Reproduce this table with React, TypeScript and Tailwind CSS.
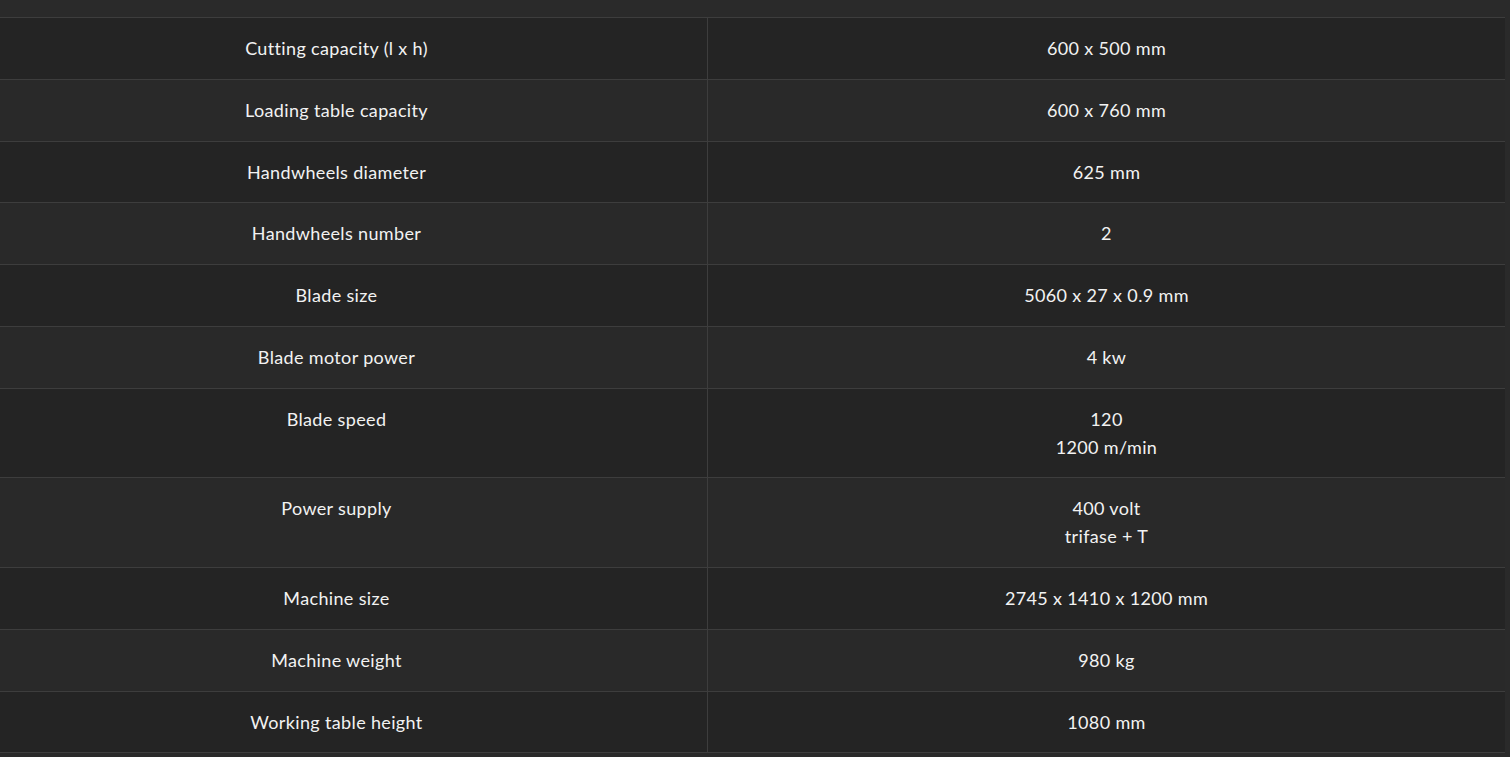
import React from "react";

const rows: [string, string[]][] = [
  ["Cutting capacity (l x h)", ["600 x 500 mm"]],
  ["Loading table capacity", ["600 x 760 mm"]],
  ["Handwheels diameter", ["625 mm"]],
  ["Handwheels number", ["2"]],
  ["Blade size", ["5060 x 27 x 0.9 mm"]],
  ["Blade motor power", ["4 kw"]],
  ["Blade speed", ["120", "1200 m/min"]],
  ["Power supply", ["400 volt", "trifase + T"]],
  ["Machine size", ["2745 x 1410 x 1200 mm"]],
  ["Machine weight", ["980 kg"]],
  ["Working table height", ["1080 mm"]],
];

export default function App() {
  return (
    <div
      className="min-h-[757px] w-full bg-[#2a2a2a] pt-[17px] pr-[5px] text-[18px] leading-[27.8px] tracking-[0.35px] text-[#f2f2f2]"
      style={{ fontFamily: "Lato, 'Open Sans', sans-serif" }}
    >
      <div className="border-t border-[#3d3d3d]">
        {rows.map(([label, values], i) => (
          <div
            key={label}
            className={`flex border-b border-[#3d3d3d] ${i % 2 === 0 ? "bg-[#242424]" : "bg-[#292929]"}`}
          >
            <div className="w-[708px] shrink-0 border-r border-[#3d3d3d] pt-[17px] pb-[16px] pr-[34px] text-center">
              {label}
            </div>
            <div className="flex-1 pt-[17px] pb-[16px] text-center">
              {values.map((v) => (
                <div key={v}>{v}</div>
              ))}
            </div>
          </div>
        ))}
      </div>
    </div>
  );
}
